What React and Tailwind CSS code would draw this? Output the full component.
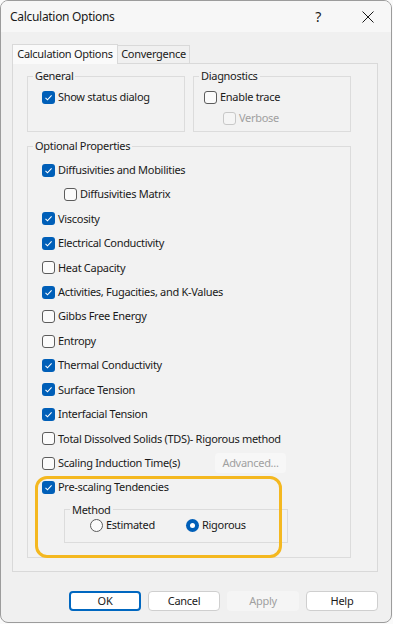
import { useState } from "react";

const font = { fontFamily: '"Noto Sans", "Open Sans", sans-serif' };

function Check({ checked, disabled }) {
  if (checked) {
    return (
      <span className="w-[13px] h-[13px] rounded-[3px] bg-[#005fb8] flex items-center justify-center shrink-0">
        <svg width="9" height="9" viewBox="0 0 9 9">
          <path d="M1.5 4.8 L3.5 6.8 L7.6 2.4" fill="none" stroke="white" strokeWidth="1.1" />
        </svg>
      </span>
    );
  }
  return (
    <span
      className={
        "w-[13px] h-[13px] rounded-[3px] border shrink-0 " +
        (disabled ? "border-[#c8c8c8] bg-[#f5f5f5]" : "border-[#5c5c5c] bg-[#fbfbfb]")
      }
    />
  );
}

function CheckRow({ label, checked, disabled, indent }) {
  return (
    <div className={"flex items-center h-[24.45px] gap-[3px] " + (indent ? "pl-[36px]" : "pl-[14px]")}>
      <Check checked={checked} disabled={disabled} />
      <span className={disabled ? "text-[#a0a0a0]" : "text-[#1a1a1a]"}>{label}</span>
    </div>
  );
}

function Radio({ checked, label, className }) {
  return (
    <div className={"flex items-center gap-[3px] " + (className || "")}>
      {checked ? (
        <span className="w-[13px] h-[13px] rounded-full bg-[#005fb8] flex items-center justify-center">
          <span className="w-[5px] h-[5px] rounded-full bg-white" />
        </span>
      ) : (
        <span className="w-[13px] h-[13px] rounded-full border border-[#5c5c5c] bg-[#fbfbfb]" />
      )}
      <span>{label}</span>
    </div>
  );
}

function Group({ title, className, children }) {
  return (
    <fieldset className={"border border-[#dcdcdc] " + className}>
      <legend className="ml-[5px] px-[2px] leading-[16px] text-[#1a1a1a]">{title}</legend>
      {children}
    </fieldset>
  );
}

const props = [
  ["Diffusivities and Mobilities", true],
  ["Diffusivities Matrix", false, true],
  ["Viscosity", true],
  ["Electrical Conductivity", true],
  ["Heat Capacity", false],
  ["Activities, Fugacities, and K-Values", true],
  ["Gibbs Free Energy", false],
  ["Entropy", false],
  ["Thermal Conductivity", true],
  ["Surface Tension", true],
  ["Interfacial Tension", true],
  ["Total Dissolved Solids (TDS)- Rigorous method", false],
];

export default function App() {
  const [tab] = useState("calc");
  return (
    <div className="w-[393px] h-[624px] bg-[#fafafa] text-[11px] tracking-[-0.3px] text-[#1a1a1a] whitespace-nowrap" style={font}>
      <div className="w-[392px] h-[623px] border border-[#9c9c9c] rounded-[8px] bg-[#f0f0f0] overflow-hidden flex flex-col">
        <div className="h-[31px] bg-[#f7f7f7] flex items-center pl-[9px] shrink-0">
          <span className="text-[12px] tracking-[-0.3px] flex-1">Calculation Options</span>
          <span className="text-[14px] mr-[41px]">?</span>
          <svg width="12" height="12" viewBox="0 0 12 12" className="mr-[17px]">
            <path d="M0.5 0.5 L11.5 11.5 M11.5 0.5 L0.5 11.5" stroke="#1a1a1a" strokeWidth="1" />
          </svg>
        </div>

        <div className="pl-[11px] pt-[11px]">
          <div className="flex items-end h-[20px]">
            <div className={"h-[20px] w-[106px] border border-b-0 border-[#d9d9d9] flex items-center justify-center relative top-[1px] " + (tab === "calc" ? "bg-[#fafafa]" : "")}>
              Calculation Options
            </div>
            <div className="h-[18px] w-[72px] border border-l-0 border-b-0 border-[#d9d9d9] flex items-center justify-center">
              Convergence
            </div>
          </div>
          <div className="w-[366px] h-[509px] border border-[#d9d9d9] bg-[#f2f2f2] px-[14px] pt-[4px]">
            <div className="flex gap-[8px]">
              <Group title="General" className="w-[158px] h-[64px]">
                <div className="flex items-center h-[20px] gap-[3px] pl-[14px] mt-[3px]">
                  <Check checked />
                  <span>Show status dialog</span>
                </div>
              </Group>
              <Group title="Diagnostics" className="w-[158px] h-[64px]">
                <div className="flex items-center h-[20px] gap-[3px] pl-[10px] mt-[3px]">
                  <Check />
                  <span>Enable trace</span>
                </div>
                <div className="flex items-center h-[20px] gap-[3px] pl-[29px] mt-[1px]">
                  <Check disabled />
                  <span className="text-[#a0a0a0]">Verbose</span>
                </div>
              </Group>
            </div>

            <Group title="Optional Properties" className="w-[324px] h-[420px] mt-[6px] pt-[3.8px]">
              {props.map(([label, checked, indent]) => (
                <CheckRow key={label} label={label} checked={checked} indent={indent} />
              ))}
              <div className="flex items-center h-[24.45px] gap-[3px] pl-[14px]">
                <Check />
                <span className="flex-1">Scaling Induction Time(s)</span>
                <span className="w-[71px] h-[20px] mr-[64px] rounded-[4px] bg-[#f7f7f7] text-[#a0a0a0] flex items-center justify-center">
                  Advanced...
                </span>
              </div>
              <div className="relative">
                <CheckRow label="Pre-scaling Tendencies" checked />
                <fieldset className="border border-[#dcdcdc] ml-[36px] w-[224px] h-[41px] mt-[2px]">
                  <legend className="ml-[5px] px-[2px] leading-[16px]">Method</legend>
                  <div className="flex items-center h-[15px] pl-[25px]">
                    <Radio label="Estimated" className="w-[96px]" />
                    <Radio checked label="Rigorous" />
                  </div>
                </fieldset>
                <div className="absolute left-[7px] top-[1px] w-[247px] h-[82px] border-[3px] border-[#f4b820] rounded-[12px] pointer-events-none" />
              </div>
            </Group>
          </div>

          <div className="flex justify-end gap-[7px] w-[366px] mt-[19px]">
            <button className="w-[72px] h-[20px] rounded-[4px] border-2 border-[#0067c0] bg-white flex items-center justify-center">OK</button>
            <button className="w-[72px] h-[20px] rounded-[4px] border border-[#cfcfcf] bg-white flex items-center justify-center">Cancel</button>
            <button className="w-[72px] h-[20px] rounded-[4px] bg-[#f5f5f5] text-[#a0a0a0] flex items-center justify-center">Apply</button>
            <button className="w-[72px] h-[20px] rounded-[4px] border border-[#cfcfcf] bg-white flex items-center justify-center">Help</button>
          </div>
        </div>
      </div>
    </div>
  );
}
